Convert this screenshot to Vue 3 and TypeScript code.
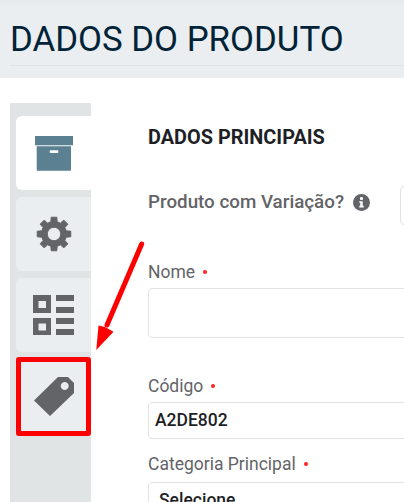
<script setup lang="ts">
const tabs = ['box', 'gear', 'list', 'tag']

function gearOutline(): string {
  const teeth = 8
  const pts: string[] = []
  for (let i = 0; i < teeth; i++) {
    const a = (i * 360) / teeth - 90
    const corners: [number, number][] = [
      [a - 14.5, 12.6],
      [a - 9.5, 17],
      [a + 9.5, 17],
      [a + 14.5, 12.6],
    ]
    for (const [deg, r] of corners) {
      const t = (deg * Math.PI) / 180
      pts.push(`${(18 + r * Math.cos(t)).toFixed(2)} ${(18 + r * Math.sin(t)).toFixed(2)}`)
    }
  }
  return 'M' + pts.join('L') + 'Z'
}
const gearPath = gearOutline() + 'M18 11.3a6.7 6.7 0 1 0 .01 0Z'
</script>

<template>
  <div class="page">
    <header class="head">
      <h1 class="title">DADOS DO PRODUTO</h1>
    </header>
    <div class="body">
      <nav class="side">
        <div v-for="t in tabs" :key="t" class="tab" :class="'tab-' + t">
          <svg v-if="t === 'box'" width="38" height="35" viewBox="0 0 38 35">
            <rect x="0" y="0" width="38" height="9.3" fill="#5b8091" />
            <path d="M1.7 10.3h34.3v23.7a.7.7 0 0 1-.7.7H2.4a.7.7 0 0 1-.7-.7z" fill="#5b8091" />
            <rect x="14.7" y="14.3" width="8.6" height="2.8" rx="1" fill="#fff" />
          </svg>
          <svg v-else-if="t === 'gear'" width="36" height="36" viewBox="0 0 36 36">
            <path fill="#636467" fill-rule="evenodd" stroke="#636467" stroke-width="1" stroke-linejoin="round" :d="gearPath" />
          </svg>
          <svg v-else-if="t === 'list'" width="41" height="40" viewBox="0 0 41 40">
            <path fill="#636467" fill-rule="evenodd" d="M0 0h18v18H0zM5.5 6v7H13V6zM0 23h18v17H0zM5.5 28.500v7H13v-7z" />
            <path fill="#636467" d="M23 0h18v6H23zM23 12h18v6H23zM23 23h18v6H23zM23 34h18v6H23z" />
          </svg>
          <svg v-else width="40" height="39" viewBox="0 0 40 39">
            <path fill="#636467" fill-rule="evenodd" d="M24 0H34L40 6V16L16 39 0 23.500zM30.700 5a4 4 0 1 0 .01 0z" />
          </svg>
        </div>
      </nav>
      <main class="form">
        <h2 class="section">DADOS PRINCIPAIS</h2>
        <div class="variation">
          <span class="variation-label">Produto com Variação?</span>
          <svg class="info" width="17" height="17" viewBox="0 0 17 17">
            <circle cx="8.5" cy="8.5" r="8.5" fill="#636467" />
            <rect x="7" y="3" width="3" height="3" rx="1" fill="#fff" />
            <path d="M6.300 7.200h3.400v4.600h1v1.600H6.300v-1.600h1v-3H6.300z" fill="#fff" />
          </svg>
          <div class="toggle"></div>
        </div>
        <label class="label label-name">Nome <i class="req"></i></label>
        <div class="input input-name"></div>
        <label class="label label-code">Código <i class="req"></i></label>
        <div class="input input-code">A2DE802</div>
        <label class="label label-cat">Categoria Principal <i class="req"></i></label>
        <div class="input input-cat">Selecione</div>
      </main>
    </div>
    <svg class="arrow" width="60" height="120" viewBox="0 0 60 120">
      <path d="M46.700 6 12 87" stroke="#ff0000" stroke-width="5" stroke-linecap="round" fill="none" />
      <path d="M1.300 112 3.500 87.500 10 89 18.500 93.700z" fill="#ff0000" />
    </svg>
  </div>
</template>

<style>
html, body { margin: 0; background: #fff; overflow: hidden; }
</style>

<style scoped>
.page {
  position: relative;
  width: 404px;
  height: 502px;
  overflow: hidden;
  font-family: Roboto, "Liberation Sans", sans-serif;
  background: #fff;
}
.head {
  height: 78px;
  box-sizing: border-box;
  padding: 0 0 0 10px;
  background: linear-gradient(#e6e9eb 0, #ebeef0 6px);
}
.title {
  margin: 0;
  height: 66px;
  box-sizing: border-box;
  padding-top: 19px;
  font-size: 34.8px;
  line-height: 40px;
  font-weight: 400;
  color: #002337;
  border-bottom: 1px solid #e0e4e6;
  white-space: nowrap;
}
.body {
  display: flex;
  height: 424px;
  padding: 25px 0 0 10px;
  box-sizing: border-box;
}
.side {
  width: 81px;
  flex: none;
  height: 399px;
  box-sizing: border-box;
  background: #e1e4e5;
  padding: 13px 0 0 6px;
  display: flex;
  flex-direction: column;
  gap: 7px;
}
.tab {
  height: 74px;
  flex: none;
  background: #ebeef0;
  border-radius: 6px 0 0 6px;
  display: flex;
  align-items: center;
  padding-left: 18px;
  box-sizing: border-box;
}
.tab-box { background: #fff; padding-left: 19px; }
.tab-gear { padding-left: 20px; }
.tab-list { padding-left: 17px; margin-bottom: -2px; }
.tab-tag {
  height: 79px;
  border: 5px solid #ff0000;
  border-radius: 3px;
  padding-left: 13px;
}
.form {
  flex: 1;
  min-width: 0;
  padding-left: 57px;
  color: #636467;
}
.section {
  margin: 0;
  padding-top: 25px;
  height: 79px;
  box-sizing: border-box;
  font-size: 19.9px;
  line-height: 20px;
  font-weight: 700;
  color: #1e1f26;
  white-space: nowrap;
}
.variation {
  display: flex;
  align-items: center;
  height: 40px;
  white-space: nowrap;
}
.variation-label { font-size: 18.8px; font-weight: 500; line-height: 24px; }
.info { margin-left: 9px; flex: none; }
.toggle {
  position: absolute;
  left: 400px;
  top: 186px;
  width: 20px;
  height: 37px;
  border: 1px solid #e3e3e3;
  border-radius: 4px;
}
.label {
  display: flex;
  align-items: center;
  gap: 8px;
  font-size: 17.5px;
  line-height: 22px;
  white-space: nowrap;
  color: #636467;
}
.label-name { margin-top: 39px; }
.label-code { margin-top: 37px; }
.label-cat { margin-top: 14px; }
.req {
  width: 4px;
  height: 4px;
  border-radius: 50%;
  background: #ff2020;
  display: block;
}
.input {
  width: 280px;
  box-sizing: border-box;
  margin-top: 5px;
  border: 1px solid #e3e3e3;
  border-radius: 4px;
  font-size: 17.5px;
  font-weight: 500;
  color: #1e1f26;
  padding-left: 6px;
  white-space: nowrap;
}
.input-name { height: 50px; }
.input-code { height: 37px; line-height: 35px; }
.input-cat { height: 60px; line-height: 34px; padding-left: 10px; margin-top: 7px; }
.arrow {
  position: absolute;
  left: 95px;
  top: 238px;
}
</style>
